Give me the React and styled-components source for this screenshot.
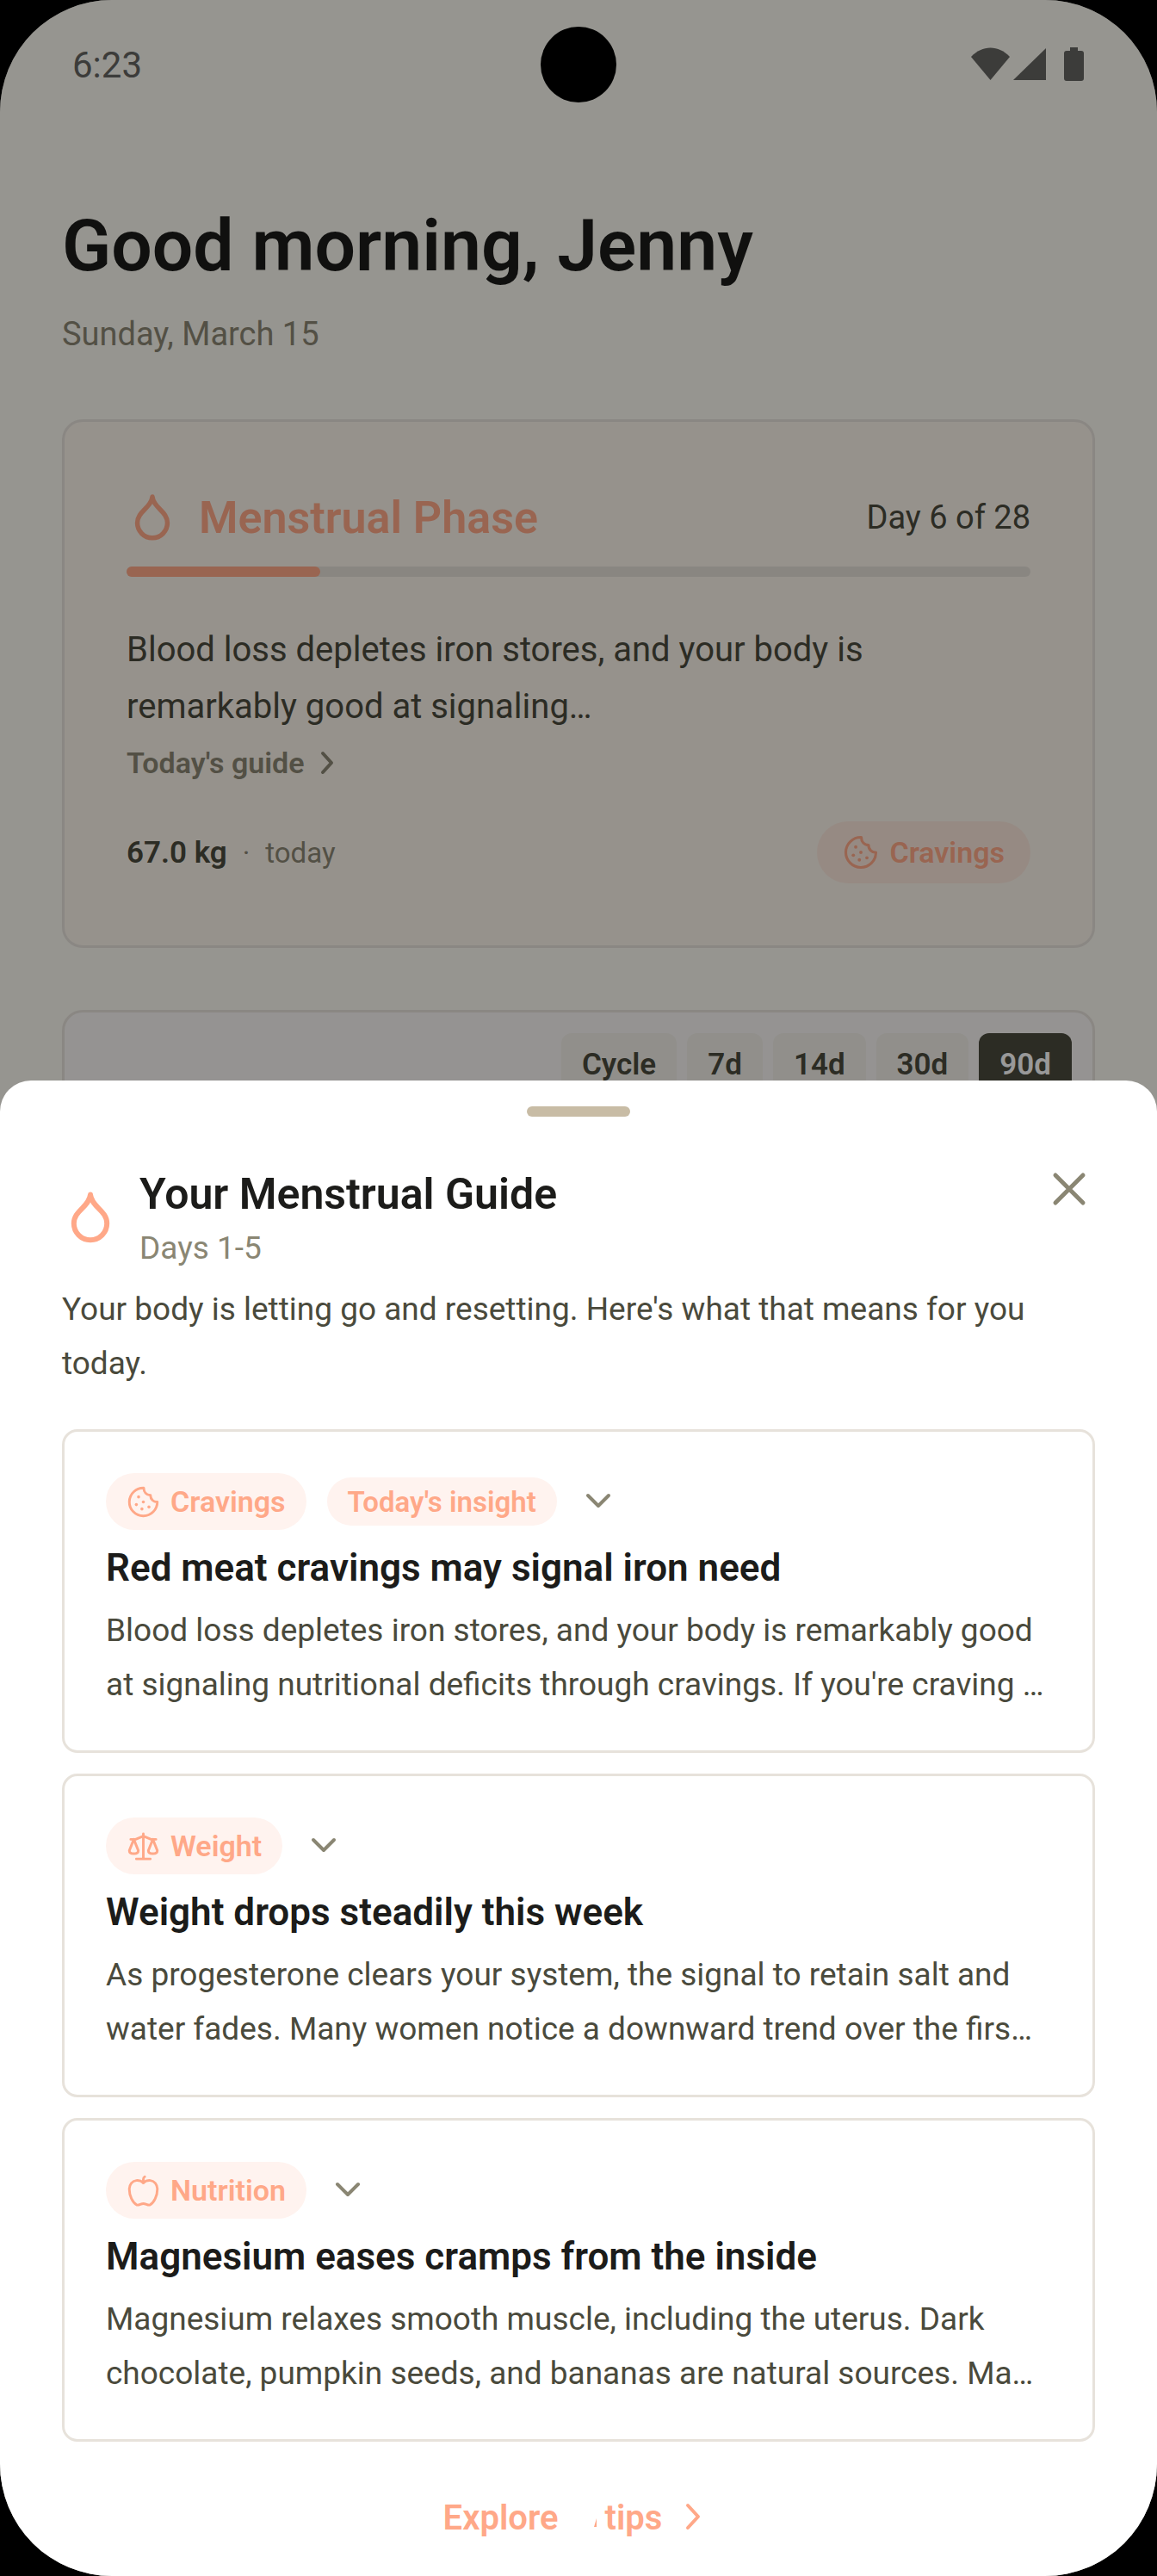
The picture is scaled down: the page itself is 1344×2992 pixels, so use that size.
import React, { useState } from "react";
import styled, { createGlobalStyle } from "styled-components";

const insights = [
  {
    id: "cravings",
    tag: "Cravings",
    icon: "cookie",
    today: true,
    title: "Red meat cravings may signal iron need",
    body: "Blood loss depletes iron stores, and your body is remarkably good\nat signaling nutritional deficits through cravings. If you're craving …",
  },
  {
    id: "weight",
    tag: "Weight",
    icon: "scales",
    title: "Weight drops steadily this week",
    body: "As progesterone clears your system, the signal to retain salt and\nwater fades. Many women notice a downward trend over the firs…",
  },
  {
    id: "nutrition",
    tag: "Nutrition",
    icon: "apple",
    title: "Magnesium eases cramps from the inside",
    body: "Magnesium relaxes smooth muscle, including the uterus. Dark\nchocolate, pumpkin seeds, and bananas are natural sources. Ma…",
  },
];

const ranges = ["Cycle", "7d", "14d", "30d", "90d"];

function DropIcon({ size }) {
  return (
    <DropSvg viewBox="0 0 66 66" $size={size} aria-hidden="true">
      <path d="M33 6.5C31.5 21 13.8 25 13.8 40a19.2 19.2 0 0 0 38.4 0C52.2 25 34.5 21 33 6.5z" />
    </DropSvg>
  );
}

function TagIcon({ name, size }) {
  return (
    <TagSvg viewBox="0 0 24 24" $size={size} aria-hidden="true">
      {name === "cookie" && (
        <>
          <path d="M12.3 2A10 10 0 1 0 22 12c-2.7.2-4.9-1.8-4.9-4.8-2.9 0-4.8-2.2-4.8-5.2z" />
          <g fill="currentColor" stroke="none">
            <circle cx="8.6" cy="8.4" r="1.1" />
            <circle cx="12" cy="12" r="1.1" />
            <circle cx="7" cy="13.9" r="1.1" />
            <circle cx="16" cy="15.6" r="1.1" />
            <circle cx="11" cy="17" r="1.1" />
          </g>
        </>
      )}
      {name === "scales" && (
        <>
          <path d="M12 3v18M7 21h10M3 7h3.5L12 4.7 17.5 7H21" />
          <path d="M5.2 7 2 15c0 1.4 1.3 2.2 3.2 2.2S8.4 16.4 8.4 15z" />
          <path d="M18.8 7l-3.2 8c0 1.4 1.3 2.2 3.2 2.2S22 16.4 22 15z" />
        </>
      )}
      {name === "apple" && (
        <>
          <path d="M12 6.4C10.5 5 8.8 4.5 7 4.7 4 5 2 7.6 2 11c0 4.5 2.2 9.5 5.3 11.2 1.5.4 3-1 4.7-1s3.2 1.4 4.7 1C19.8 20.5 22 15.5 22 11c0-3.4-2-6-5-6.3-1.8-.2-3.5.3-5 1.7z" />
          <path d="M12 6.4V3.8c0-.9.4-1.5 1-1.8" />
        </>
      )}
    </TagSvg>
  );
}

function InsightCard({ insight }) {
  return (
    <Insight>
      <TagRow>
        <Tag>
          <TagIcon name={insight.icon} size={39} />
          {insight.tag}
        </Tag>
        {insight.today ? <TodayTag>Today's insight</TodayTag> : null}
        <ExpandButton type="button" aria-label={`Expand ${insight.title}`}>
          <svg width="48" height="48" viewBox="0 0 48 48" aria-hidden="true">
            <path d="M12 17l12 12 12-12" />
          </svg>
        </ExpandButton>
      </TagRow>
      <InsightTitle>{insight.title}</InsightTitle>
      <Body>{insight.body}</Body>
    </Insight>
  );
}

export default function App() {
  const [range, setRange] = useState("90d");

  return (
    <Screen>
      <GlobalStyle />
      <Dashboard>
        <StatusBar>
          <span>6:23</span>
          <svg width="132" height="40" viewBox="0 0 132 40" aria-hidden="true">
            <path d="M0 11C13-3 32-3 45 11L22.5 38z" />
            <path d="M87 1v37H49z" />
            <path d="M115 0h9v4h4q3 0 3 3v29q0 3-3 3h-17q-3 0-3-3V7q0-3 3-3h4z" />
          </svg>
        </StatusBar>
        <Greeting>Good morning, Jenny</Greeting>
        <DateLine>Sunday, March 15</DateLine>

        <PhaseCard>
          <PhaseHeader>
            <DropIcon size={60} />
            <PhaseName>Menstrual Phase</PhaseName>
            <DayCount>Day 6 of 28</DayCount>
          </PhaseHeader>
          <Track>
            <Fill style={{ width: `${(6 / 28) * 100}%` }} />
          </Track>
          <PhaseText>
            {"Blood loss depletes iron stores, and your body is\nremarkably good at signaling…"}
          </PhaseText>
          <GuideLink href="#guide">
            Today's guide
            <svg width="42" height="42" viewBox="0 0 42 42" aria-hidden="true">
              <path d="M15 10l10 11-10 11" />
            </svg>
          </GuideLink>
          <PhaseFooter>
            <Weight>67.0 kg</Weight>
            <Muted>·</Muted>
            <Muted>today</Muted>
            <PhaseTag>
              <TagIcon name="cookie" size={42} />
              Cravings
            </PhaseTag>
          </PhaseFooter>
        </PhaseCard>

        <ChartCard>
          {ranges.map((r) => (
            <RangeButton
              key={r}
              type="button"
              $active={r === range}
              onClick={() => setRange(r)}
            >
              {r}
            </RangeButton>
          ))}
        </ChartCard>
      </Dashboard>
      <Scrim />
      <Camera />

      <Sheet role="dialog" aria-labelledby="guide-title">
        <Handle />
        <SheetHeader>
          <DropIcon size={66} />
          <div>
            <SheetTitle id="guide-title">Your Menstrual Guide</SheetTitle>
            <SheetDays>Days 1-5</SheetDays>
          </div>
          <CloseButton type="button" aria-label="Close">
            <svg width="60" height="60" viewBox="0 0 60 60" aria-hidden="true">
              <path d="M14 14l32 32M46 14L14 46" />
            </svg>
          </CloseButton>
        </SheetHeader>
        <Intro>
          {"Your body is letting go and resetting. Here's what that means for you\ntoday."}
        </Intro>
        <Insights>
          {insights.map((insight) => (
            <InsightCard key={insight.id} insight={insight} />
          ))}
        </Insights>
        <ExploreLink href="#tips">
          <span>Explore</span>
          <svg width="54" height="24" viewBox="0 0 54 24" aria-hidden="true">
            <path d="M45 13v10h-3z" fill="currentColor" stroke="none" />
          </svg>
          <span>tips</span>
          <svg width="48" height="48" viewBox="0 0 48 48" aria-hidden="true">
            <path d="M18 10l12 13-12 13" />
          </svg>
        </ExploreLink>
      </Sheet>
    </Screen>
  );
}

const GlobalStyle = createGlobalStyle`
  body {
    margin: 0;
    background: #000;
    font-family: Roboto, "Liberation Sans", sans-serif;
  }
  *, *::before, *::after {
    box-sizing: border-box;
  }
  h1, h2, h3, p {
    margin: 0;
  }
  button {
    border: 0;
    padding: 0;
    font-family: inherit;
    cursor: pointer;
  }
  svg {
    flex: none;
    display: block;
  }
`;

const Screen = styled.div`
  position: relative;
  min-height: 100vh;
  overflow: hidden;
  border-radius: 130px;
  background: #faf8f0;
`;
const Dashboard = styled.main`
  padding: 0 72px;
`;
const StatusBar = styled.div`
  display: flex;
  align-items: center;
  justify-content: space-between;
  height: 150px;
  padding: 0 12px;
  font-size: 42px;
  color: #646461;
  & > svg {
    fill: #646461;
  }
`;
const Greeting = styled.h1`
  margin-top: 84px;
  font-size: 84px;
  line-height: 104px;
  font-weight: 600;
  color: #1c1c1a;
`;
const DateLine = styled.p`
  margin-top: 20px;
  font-size: 38px;
  line-height: 60px;
  color: #8a8673;
`;
const Card = styled.section`
  border: 3px solid #e7e2db;
`;
const PhaseCard = styled(Card)`
  margin-top: 69px;
  padding: 72px;
  border-radius: 24px;
  background: #faf3ea;
`;
const PhaseHeader = styled.div`
  display: flex;
  align-items: center;
  gap: 24px;
  height: 78px;
  color: #ffa888;
`;
const PhaseName = styled.h2`
  font-size: 52px;
  font-weight: 600;
`;
const DayCount = styled.p`
  margin-left: auto;
  font-size: 38px;
  color: #4a4a3c;
`;
const Track = styled.div`
  height: 12px;
  margin-top: 18px;
  border-radius: 6px;
  background: #e5e0d8;
`;
const Fill = styled.div`
  height: 12px;
  border-radius: 6px;
  background: #ffa888;
`;
const PhaseText = styled.p`
  margin-top: 52px;
  font-size: 40px;
  line-height: 66px;
  white-space: pre-line;
  color: #4a4a3c;
`;
const GuideLink = styled.a`
  display: flex;
  align-items: center;
  gap: 6px;
  height: 64px;
  font-size: 34px;
  font-weight: 600;
  color: #8a8673;
  text-decoration: none;
  & > svg {
    fill: none;
    stroke: currentColor;
    stroke-width: 4;
    stroke-linecap: round;
    stroke-linejoin: round;
  }
`;
const PhaseFooter = styled.div`
  display: flex;
  align-items: center;
  gap: 18px;
  margin-top: 36px;
`;
const Weight = styled.span`
  font-size: 35px;
  font-weight: 600;
  color: #4a4a3c;
`;
const Muted = styled.span`
  font-size: 33px;
  color: #8a8673;
`;
const Tag = styled.span`
  display: flex;
  align-items: center;
  gap: 12px;
  height: 66px;
  padding: 0 24px;
  border-radius: 36px;
  font-size: 34px;
  font-weight: 600;
  color: #ffa888;
  background: #fff3ef;
`;
const TodayTag = styled(Tag)`
  height: 56px;
  font-size: 33px;
`;
const PhaseTag = styled(Tag)`
  height: 72px;
  margin-left: auto;
  padding: 0 30px;
  background: #fbe7db;
`;
const ChartCard = styled(Card)`
  display: flex;
  justify-content: flex-end;
  gap: 12px;
  margin-top: 72px;
  padding: 24px;
  border-radius: 24px;
  background: #f8f6f4;
`;
const RangeButton = styled.button`
  height: 72px;
  padding: 0 24px;
  border-radius: 12px;
  font-size: 35px;
  font-weight: 600;
  color: ${({ $active }) => ($active ? "#fff" : "#4a4a3c")};
  background: ${({ $active }) => ($active ? "#4a4a3c" : "#f2efe8")};
`;
const Scrim = styled.div`
  position: absolute;
  inset: 0;
  background: rgba(0, 0, 0, 0.4);
`;
const Camera = styled.div`
  position: absolute;
  top: 31px;
  left: 50%;
  width: 88px;
  height: 88px;
  margin-left: -44px;
  border-radius: 50%;
  background: #000;
`;
const Sheet = styled.section`
  position: absolute;
  left: 0;
  right: 0;
  bottom: 0;
  padding: 30px 72px 38px;
  border-radius: 36px 36px 0 0;
  background: #fff;
`;
const Handle = styled.div`
  width: 120px;
  height: 12px;
  margin: 0 auto;
  border-radius: 6px;
  background: #c8bca5;
`;
const SheetHeader = styled.header`
  display: flex;
  align-items: center;
  gap: 24px;
  margin-top: 54px;
  color: #ffa888;
`;
const SheetTitle = styled.h2`
  font-size: 50px;
  line-height: 72px;
  font-weight: 600;
  color: #1c1c1a;
`;
const SheetDays = styled.p`
  font-size: 37px;
  line-height: 54px;
  color: #8a8673;
`;
const CloseButton = styled.button`
  align-self: flex-start;
  margin-left: auto;
  background: none;
  & path {
    stroke: #8a8673;
    stroke-width: 5;
    stroke-linecap: round;
  }
`;
const Body = styled.p`
  font-size: 37px;
  line-height: 63px;
  white-space: pre-line;
  color: #4a4a3c;
`;
const Intro = styled(Body)`
  margin-top: 12px;
`;
const Insights = styled.div`
  display: flex;
  flex-direction: column;
  gap: 24px;
  margin-top: 45px;
`;
const Insight = styled.article`
  padding: 48px 48px 45px;
  border: 3px solid #e7e2db;
  border-radius: 18px;
`;
const TagRow = styled.div`
  display: flex;
  align-items: center;
  gap: 24px;
`;
const ExpandButton = styled.button`
  background: none;
  & path {
    fill: none;
    stroke: #8a8673;
    stroke-width: 4;
    stroke-linecap: round;
    stroke-linejoin: round;
  }
`;
const InsightTitle = styled.h3`
  margin: 15px 0 12px;
  font-size: 44px;
  line-height: 58px;
  font-weight: 600;
  color: #1c1c1a;
`;
const ExploreLink = styled.a`
  display: flex;
  align-items: center;
  justify-content: center;
  height: 60px;
  margin-top: 58px;
  font-size: 40px;
  font-weight: 600;
  color: #ffa888;
  text-decoration: none;
  & > svg {
    fill: none;
    stroke: currentColor;
    stroke-width: 4;
    stroke-linecap: round;
    stroke-linejoin: round;
  }
  & > svg:last-child {
    margin-left: 12px;
  }
`;
const DropSvg = styled.svg`
  width: ${({ $size }) => $size}px;
  height: ${({ $size }) => $size}px;
  fill: none;
  stroke: currentColor;
  stroke-width: 6;
  stroke-linejoin: round;
`;
const TagSvg = styled.svg`
  width: ${({ $size }) => $size}px;
  height: ${({ $size }) => $size}px;
  fill: none;
  stroke: currentColor;
  stroke-width: 1.8;
  stroke-linecap: round;
  stroke-linejoin: round;
`;
